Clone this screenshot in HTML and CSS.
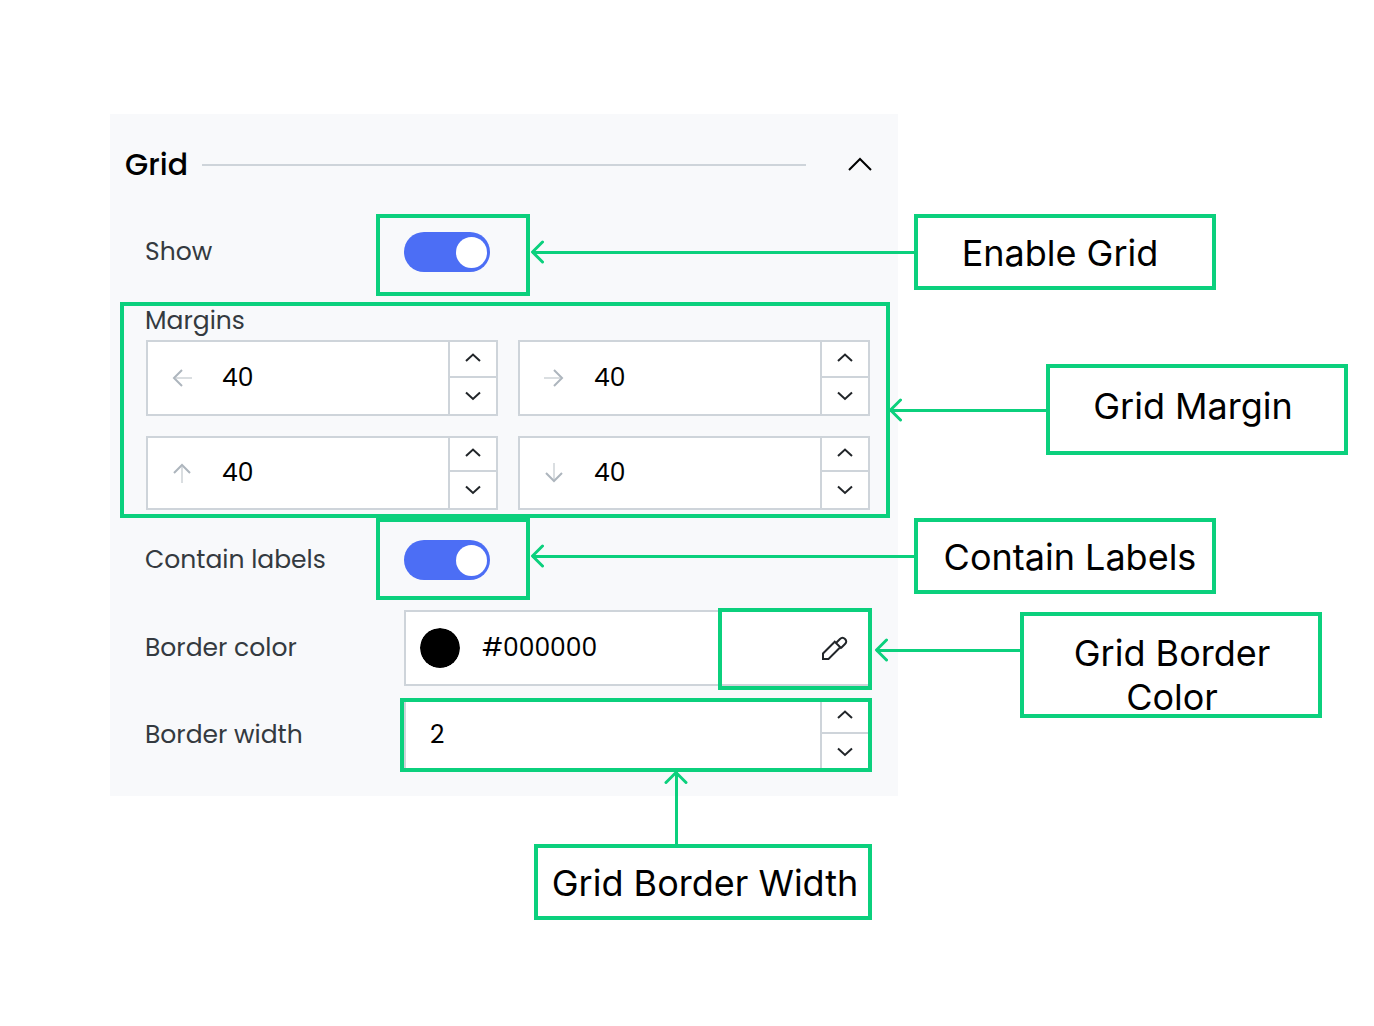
FILE: index.html
```html
<!DOCTYPE html>
<html lang="en">
<head>
<meta charset="utf-8">
<title>Grid settings</title>
<link rel="stylesheet" href="styles.css">
</head>
<body>
<svg class="sprite" aria-hidden="true">
  <symbol id="chev-up" viewBox="0 0 16 10"><path d="M1 8 8 1.500l7 6.500"/></symbol>
  <symbol id="chev-down" viewBox="0 0 16 10"><path d="M1 1.500 8 8l7-6.500"/></symbol>
  <symbol id="arrow-left" viewBox="0 0 20 20"><path d="M10 2 2 10l8 8"/><path class="faint" d="M4 10h16"/></symbol>
  <symbol id="head" viewBox="0 0 14 24"><path d="M12.500 2 2.500 12l10 10"/></symbol>
</svg>
<main class="figure">
  <form class="panel">
    <header class="panel-head">
      <h1 class="title">Grid</h1>
      <span class="rule"></span>
      <button type="button" class="collapse" aria-label="Collapse"><svg viewBox="0 0 26 16"><path d="M2 13 13 2l11 11"/></svg></button>
    </header>

    <div class="row">
      <label class="label" for="show">Show</label>
      <input class="switch" type="checkbox" id="show" checked>
      <span class="mark mark-switch"></span>
      <span class="arrow arrow-switch"><svg><use href="#head"/></svg></span>
      <p class="callout">Enable Grid</p>
    </div>

    <fieldset class="margins">
      <legend class="label legend">Margins</legend>
      <div class="fields">
        <div class="field tall">
          <svg class="dir"><use href="#arrow-left"/></svg>
          <input class="value" type="number" value="40" aria-label="Left margin">
          <div class="steps"><button type="button" aria-label="Increase"><svg><use href="#chev-up"/></svg></button><button type="button" aria-label="Decrease"><svg><use href="#chev-down"/></svg></button></div>
        </div>
        <div class="field tall">
          <svg class="dir right"><use href="#arrow-left"/></svg>
          <input class="value" type="number" value="40" aria-label="Right margin">
          <div class="steps"><button type="button" aria-label="Increase"><svg><use href="#chev-up"/></svg></button><button type="button" aria-label="Decrease"><svg><use href="#chev-down"/></svg></button></div>
        </div>
        <div class="field">
          <svg class="dir up"><use href="#arrow-left"/></svg>
          <input class="value" type="number" value="40" aria-label="Top margin">
          <div class="steps"><button type="button" aria-label="Increase"><svg><use href="#chev-up"/></svg></button><button type="button" aria-label="Decrease"><svg><use href="#chev-down"/></svg></button></div>
        </div>
        <div class="field">
          <svg class="dir down"><use href="#arrow-left"/></svg>
          <input class="value" type="number" value="40" aria-label="Bottom margin">
          <div class="steps"><button type="button" aria-label="Increase"><svg><use href="#chev-up"/></svg></button><button type="button" aria-label="Decrease"><svg><use href="#chev-down"/></svg></button></div>
        </div>
      </div>
      <span class="mark mark-margins"></span>
      <span class="arrow arrow-margins"><svg><use href="#head"/></svg></span>
      <p class="callout callout-margins">Grid Margin</p>
    </fieldset>

    <div class="row row-contain">
      <label class="label" for="contain">Contain labels</label>
      <input class="switch" type="checkbox" id="contain" checked>
      <span class="mark mark-switch"></span>
      <span class="arrow arrow-switch"><svg><use href="#head"/></svg></span>
      <p class="callout">Contain Labels</p>
    </div>

    <div class="row">
      <label class="label" for="color">Border color</label>
      <div class="field tall">
        <input class="swatch" type="color" value="#000000" aria-label="Pick border color">
        <input class="value" type="text" id="color" value="#000000">
        <button type="button" class="picker" aria-label="Eyedropper"><svg viewBox="0 0 28 28"><path d="M14 8.500 3 19.500V25h5.500L19.500 14M14 7l7.500 7.500M16 9l4-4q2.500-2.500 5 0t0 5l-4 4"/></svg></button>
      </div>
      <span class="mark mark-color"></span>
      <span class="arrow arrow-color"><svg><use href="#head"/></svg></span>
      <p class="callout callout-color">Grid Border Color</p>
    </div>

    <div class="row row-width">
      <label class="label" for="width">Border width</label>
      <div class="field">
        <input class="value indent" type="number" id="width" value="2">
        <div class="steps"><button type="button" aria-label="Increase"><svg><use href="#chev-up"/></svg></button><button type="button" aria-label="Decrease"><svg><use href="#chev-down"/></svg></button></div>
      </div>
      <span class="mark mark-width"></span>
      <span class="arrow arrow-width"><svg viewBox="0 0 24 14"><path d="M2 12.500 12 2.500l10 10"/></svg></span>
      <p class="callout callout-width">Grid Border Width</p>
    </div>
  </form>
</main>
</body>
</html>
```
FILE: styles.css
```css
:root {
  --green: #0bd07d;
  --line: #ced4da;
  --blue: #4c6ef5;
}
* { box-sizing: border-box; }
body {
  margin: 0;
  background: #fff;
  color: #000;
  font: 25px/38px Poppins, Inter, sans-serif;
}
svg { fill: none; stroke: currentColor; stroke-width: 2; display: block; }
button, input { font: inherit; color: inherit; border: 0; padding: 0; margin: 0; background: none; }
.sprite { position: absolute; width: 0; height: 0; }
.faint { opacity: .45; }

.figure { min-height: 100vh; padding: 114px 476px 160px 110px; }
.panel { background: #f8f9fb; padding-bottom: 24px; min-width: 640px; }

.panel-head { display: flex; align-items: center; height: 102px; padding: 0 24px 0 15px; }
.title { margin: 0; font-size: 30px; font-weight: 500; }
.rule { flex: 1; height: 2px; margin: 0 40px 0 14px; background: var(--line); }
.collapse { width: 28px; height: 28px; display: grid; place-items: center; }
.collapse svg { width: 26px; height: 16px; }

.row { position: relative; display: flex; align-items: center; height: 76px; padding: 0 28px 0 35px; }
.panel-head + .row { margin-top: -2px; }
.row-contain { height: 100px; }
.row-width { height: 74px; margin-top: 12px; }
.label { width: 259px; color: #343a40; }

.switch {
  appearance: none;
  display: flex;
  align-items: center;
  justify-content: flex-end;
  width: 86px;
  height: 40px;
  padding: 0 3px;
  border-radius: 20px;
  background: var(--blue);
}
.switch::before { content: ""; width: 31px; height: 31px; border-radius: 50%; background: #fff; }
.switch:not(:checked) { justify-content: flex-start; background: var(--line); }

.margins { position: relative; margin: 12px 0 0; padding: 0 28px 0 36px; border: 0; min-width: 0; }
.legend { padding: 0; margin-left: -1px; }
.fields { display: grid; grid-template-columns: 1fr 1fr; gap: 20px; }
.field { display: flex; align-items: center; flex: 1; min-width: 0; height: 74px; border: 2px solid var(--line); background: #fff; }
.field.tall { height: 76px; }
.value { flex: 1; min-width: 0; outline: 0; appearance: textfield; }
.value::-webkit-inner-spin-button { appearance: none; }
.indent { padding-left: 24px; }
.dir { width: 20px; height: 20px; margin: 0 30px 0 24px; color: #adb5bd; }
.right { transform: rotate(180deg); }
.up { transform: rotate(90deg); }
.down { transform: rotate(-90deg); }

.steps { display: flex; flex-direction: column; align-self: stretch; width: 48px; border-left: 2px solid var(--line); }
.steps button { display: grid; place-items: center; height: 36px; color: #212529; }
.steps button:first-child { flex: 1; border-bottom: 2px solid var(--line); padding-bottom: 2px; }
.steps svg { width: 16px; height: 10px; }

.swatch { appearance: none; width: 40px; height: 40px; margin: 0 22px 0 14px; border-radius: 50%; overflow: hidden; }
.swatch::-webkit-color-swatch-wrapper { padding: 0; }
.swatch::-webkit-color-swatch { border: 0; border-radius: 50%; }
.picker { width: 28px; height: 28px; margin-right: 20px; color: #212529; }

/* Annotations lie over the panel and are anchored to the row they explain. */
.mark { position: absolute; border: 4px solid var(--green); pointer-events: none; }
.mark-switch { left: 266px; top: 0; width: 154px; height: 82px; }
.row-contain .mark-switch { top: 8px; }
.mark-margins { inset: -38px 8px -8px 10px; }
.mark-color { right: 26px; top: -2px; width: 154px; height: 82px; }
.mark-width { inset: 0 26px 0 290px; }

.arrow { position: absolute; height: 24px; display: flex; align-items: center; color: var(--green); }
.arrow svg { width: 14px; height: 24px; stroke-width: 3; stroke-linecap: round; stroke-linejoin: round; }
.arrow::after { content: ""; flex: 1; height: 3px; margin-left: -12px; background: var(--green); }
.arrow-switch { left: 420px; right: -16px; top: 26px; }
.row-contain .arrow-switch { top: 34px; }
.arrow-margins { left: calc(100% - 10px); width: 158px; top: 58px; }
.arrow-color { left: calc(100% - 24px); width: 146px; top: 28px; }
.arrow-width { flex-direction: column; right: 210px; top: 72px; width: 24px; height: 76px; }
.arrow-width svg { width: 24px; height: 14px; }
.arrow-width::after { width: 3px; margin: -12px 0 0; }

.callout {
  position: absolute;
  left: calc(100% + 16px);
  top: 0;
  width: 302px;
  height: 76px;
  margin: 0;
  padding: 13px 20px 0 10px;
  border: 4px solid var(--green);
  font: 36px/44px Inter, sans-serif;
  text-align: center;
}
.row-contain .callout { top: 8px; padding: 13px 0 0 10px; }
.callout-margins { left: calc(100% + 148px); top: 24px; height: 91px; padding: 16px 20px 0 12px; }
.callout-color { left: calc(100% + 122px); top: 2px; height: 106px; padding: 15px 40px 0 42px; }
.callout-width { left: auto; right: 26px; top: 146px; width: 338px; padding: 13px 0 0 4px; }
```
